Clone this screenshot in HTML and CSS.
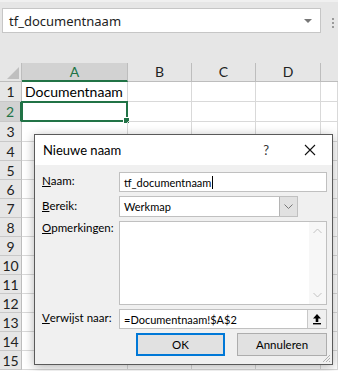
FILE: index.html
```html
<!DOCTYPE html>
<html lang="nl">
<head>
    <meta charset="UTF-8">
    <title>Nieuwe naam</title>
    <link rel="stylesheet" href="styles.css">
</head>
<body>
<div class="topbar">
    <div class="namebox">
        <span>tf_documentnaam</span>
        <span class="namebox-arrow"></span>
    </div>
    <div class="grip-dots"></div>
</div>

<div class="sheet">
    <div class="corner"><span class="corner-tri"></span></div>
    <div class="colhead sel">A</div>
    <div class="colhead">B</div>
    <div class="colhead">C</div>
    <div class="colhead">D</div>
    <div class="colhead last"></div>
</div>
<div class="rows" id="rows"></div>

<div class="dialog" role="dialog" aria-label="Nieuwe naam">
    <div class="titlebar">
        <span class="title">Nieuwe naam</span>
        <span class="help">?</span>
        <span class="close">
            <svg width="12" height="12" viewBox="0 0 12 12"><path d="M1 1 L11 11 M11 1 L1 11" stroke="#111" stroke-width="1.1"/></svg>
        </span>
    </div>
    <div class="dlg-body">
        <div class="form">
            <label><u>N</u>aam:</label>
            <div class="field">tf_documentnaam<span class="caret"></span></div>

            <label><u>B</u>ereik:</label>
            <div class="field select">
                <span>Werkmap</span>
                <span class="select-btn">
                    <svg width="9" height="6" viewBox="0 0 9 6"><path d="M0.5 0.5 L4.5 4.5 L8.5 0.5" fill="none" stroke="#777" stroke-width="1"/></svg>
                </span>
            </div>

            <label class="top"><u>O</u>pmerkingen:</label>
            <div class="field memo">
                <div class="scroll">
                    <svg width="9" height="6" viewBox="0 0 9 6"><path d="M0.5 5 L4.5 1 L8.5 5" fill="none" stroke="#c2c2c2" stroke-width="1"/></svg>
                    <svg width="9" height="6" viewBox="0 0 9 6"><path d="M0.5 1 L4.5 5 L8.5 1" fill="none" stroke="#c2c2c2" stroke-width="1"/></svg>
                </div>
            </div>

            <label><u>V</u>erwijst naar:</label>
            <div class="field ref">
                <span>=Documentnaam!$A$2</span>
                <span class="ref-btn">
                    <svg width="10" height="12" viewBox="0 0 10 12"><path d="M5 1 L9 5.5 H6.3 V9 H3.7 V5.5 H1 Z" fill="#000"/><rect x="1" y="10" width="8" height="1.4" fill="#000"/></svg>
                </span>
            </div>
        </div>
        <div class="buttons">
            <button class="btn default">OK</button>
            <button class="btn">Annuleren</button>
        </div>
    </div>
    <svg class="resize" width="10" height="10" viewBox="0 0 10 10"><path d="M9 2 L2 9 M9 5 L5 9 M9 8 L8 9" stroke="#b0b0b0" stroke-width="1"/></svg>
</div>

<script>
    const rows = document.getElementById('rows');
    for (let i = 1; i <= 15; i++) {
        const row = document.createElement('div');
        row.className = 'row' + (i > 3 ? ' short' : '');
        let html = '<div class="rowhead' + (i === 2 ? ' sel' : '') + '">' + i + '</div>';
        for (let c = 0; c < 5; c++) {
            let cls = 'cell';
            let txt = '';
            if (i === 1 && c === 0) txt = 'Documentnaam';
            if (i === 2 && c === 0) cls += ' active';
            html += '<div class="' + cls + '">' + txt + (cls.indexOf('active') > -1 ? '<span class="handle"></span>' : '') + '</div>';
        }
        row.innerHTML = html;
        rows.appendChild(row);
    }
</script>
</body>
</html>
```

FILE: styles.css
```css
body {
    margin: 0;
    width: 338px;
    height: 371px;
    overflow: hidden;
    background: #ffffff;
    font-family: "Noto Sans", sans-serif;
    position: relative;
}

.topbar {
    height: 63px;
    background: #e6e6e6;
    border-top: 2px solid #f0f0f0;
    box-sizing: border-box;
    display: flex;
    align-items: flex-start;
    padding: 6px 0 0 2px;
}

.namebox {
    width: 319px;
    height: 25px;
    box-sizing: border-box;
    background: #fff;
    border: 1px solid #c6c6c6;
    display: flex;
    align-items: center;
    justify-content: space-between;
    padding: 0 8px 0 6px;
    font-size: 13px;
    color: #222;
}

.namebox-arrow {
    width: 0;
    height: 0;
    border-left: 4px solid transparent;
    border-right: 4px solid transparent;
    border-top: 4px solid #777;
}

.grip-dots {
    width: 2px;
    height: 10px;
    margin: 10px 0 0 11px;
    background: repeating-linear-gradient(#9a9a9a 0 2px, transparent 2px 4px);
}

.sheet {
    display: grid;
    grid-template-columns: 22px 106px 64px 64px 65px 1fr;
    height: 19px;
    background: #e6e6e6;
}

.corner {
    position: relative;
    border-right: 1px solid #bdbdbd;
    border-bottom: 1px solid #bdbdbd;
}

.corner-tri {
    position: absolute;
    right: 2px;
    bottom: 2px;
    width: 0;
    height: 0;
    border-left: 12px solid transparent;
    border-bottom: 12px solid #bfbfbf;
}

.colhead {
    font-family: Lato, sans-serif;
    font-size: 14px;
    color: #222;
    text-align: center;
    line-height: 18px;
    border-right: 1px solid #bdbdbd;
    border-bottom: 1px solid #bdbdbd;
}

.colhead.sel {
    background: #d2d2d2;
    color: #217346;
    border-bottom: 2px solid #217346;
    line-height: 17px;
}

.colhead.last {
    border-right: none;
}

.row {
    display: grid;
    grid-template-columns: 22px 106px 64px 64px 65px 1fr;
    height: 20px;
}

.row.short {
    height: 19px;
}

.rowhead {
    background: #e6e6e6;
    font-family: Lato, sans-serif;
    font-size: 14px;
    color: #222;
    text-align: center;
    display: flex;
    align-items: center;
    justify-content: center;
    border-right: 1px solid #bdbdbd;
    border-bottom: 1px solid #c8c8c8;
}

.rowhead.sel {
    background: #d2d2d2;
    color: #217346;
    border-right: 2px solid #217346;
}

.cell {
    border-right: 1px solid #d9d9d9;
    border-bottom: 1px solid #d9d9d9;
    font-family: Lato, sans-serif;
    font-size: 14px;
    color: #000;
    padding-left: 3px;
    display: flex;
    align-items: center;
    white-space: nowrap;
    position: relative;
}

.cell.active {
    border: 2px solid #217346;
    margin: -1px 0 0 -1px;
}

.handle {
    position: absolute;
    right: -4px;
    bottom: -4px;
    width: 5px;
    height: 5px;
    background: #217346;
    border: 1px solid #fff;
}

/* dialog window floats above the sheet */
.dialog {
    position: absolute;
    left: 34px;
    top: 134px;
    width: 299px;
    height: 231px;
    box-sizing: border-box;
    border: 1px solid #5a5a5a;
    background: #f0f0f0;
    box-shadow: 0 2px 10px rgba(0, 0, 0, 0.3);
    display: flex;
    flex-direction: column;
    font-family: Lato, sans-serif;
}

.titlebar {
    height: 30px;
    background: #fff;
    display: flex;
    align-items: center;
    padding-left: 8px;
    font-size: 13px;
    color: #000;
}

.title {
    flex: 1;
}

.help {
    font-size: 13px;
    color: #333;
    margin-right: 35px;
}

.close {
    display: flex;
    margin-right: 16px;
}

.dlg-body {
    flex: 1;
    padding: 7px 5px 0 7px;
    font-size: 11.5px;
    color: #000;
}

.form {
    display: grid;
    grid-template-columns: 77px 208px;
    grid-template-rows: 20px 21px 84px 20px;
    row-gap: 4px;
}

.form label {
    display: flex;
    align-items: center;
    padding-bottom: 3px;
}

.form label.top {
    align-items: flex-start;
    padding-top: 0;
}

.field {
    background: #fff;
    border: 1px solid #c0c0c0;
    box-sizing: border-box;
    display: flex;
    align-items: center;
    padding-left: 4px;
    font-size: 11px;
    white-space: nowrap;
}

.caret {
    width: 1px;
    height: 13px;
    background: #000;
    margin-left: 1px;
}

.field.select {
    width: 179px;
    justify-content: space-between;
    padding-right: 0;
}

.select-btn {
    width: 17px;
    height: 19px;
    background: #e1e1e1;
    border-left: 1px solid #b4b4b4;
    display: flex;
    align-items: center;
    justify-content: center;
}

.field.memo {
    justify-content: flex-end;
    align-items: stretch;
}

.scroll {
    width: 17px;
    background: #f7f7f7;
    display: flex;
    flex-direction: column;
    justify-content: space-between;
    align-items: center;
    padding: 6px 0;
}

.field.ref {
    justify-content: space-between;
    padding-right: 0;
}

.ref-btn {
    width: 18px;
    height: 18px;
    background: #f0f0f0;
    border-left: 1px solid #c8c8c8;
    display: flex;
    align-items: center;
    justify-content: center;
}

.buttons {
    display: flex;
    justify-content: flex-end;
    gap: 12px;
    margin-top: 4px;
}

.btn {
    width: 90px;
    height: 23px;
    background: #e1e1e1;
    border: 1px solid #adadad;
    font-family: Lato, sans-serif;
    font-size: 11.5px;
    color: #000;
    padding: 0;
}

.btn.default {
    width: 89px;
    border: 2px solid #0078d7;
}

.resize {
    position: absolute;
    right: 1px;
    bottom: 1px;
}
```
